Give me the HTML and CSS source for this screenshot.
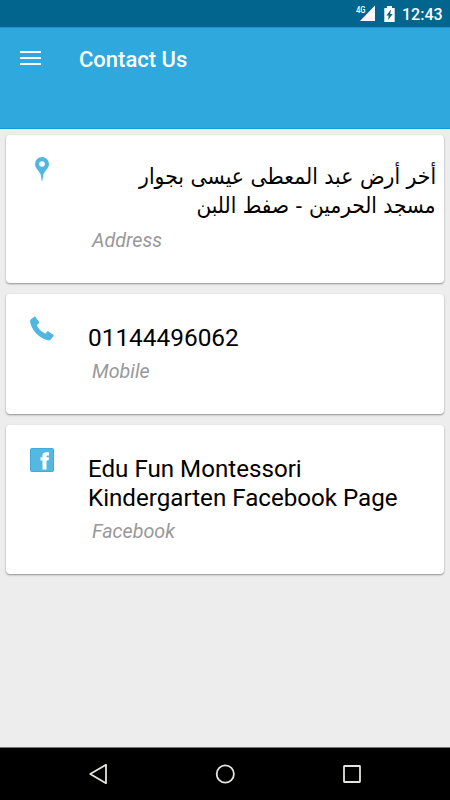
FILE: index.html
```
<!DOCTYPE html>
<html lang="en">
<head>
<meta charset="utf-8">
<title>Contact Us</title>
<link rel="stylesheet" href="styles.css">
</head>
<body>
<div class="screen">
  <div class="status">
    <svg class="signal" width="20" height="21" viewBox="0 0 20 21"><path d="M19 5.500v15.500H4z" fill="#fff"/></svg>
    <span class="net">4G</span>
    <svg class="battery" width="11" height="16" viewBox="0 0 11 16"><path d="M3 2V0h5v2h2.700v14H.3V2z" fill="#fff"/><path d="M7 3.500L2.300 9.500h2.500L4 14l4.700-6H6.200z" fill="#075f83"/></svg>
    <span class="clock">12:43</span>
  </div>
  <header class="toolbar">
    <svg class="menu" width="21" height="16" viewBox="0 0 21 16"><path d="M0 2h21M0 8h21M0 14h21" stroke="#fff" stroke-width="2"/></svg>
    <h1>Contact Us</h1>
  </header>
  <main>
    <section class="card address">
      <svg class="icon" width="26" height="26" viewBox="0 0 26 26"><path fill-rule="evenodd" d="M13 1a7 7 0 0 0-7 7c0 4 3.500 6 5.700 10.500L12.700 25h.6l1-6.500C16.500 14 20 12 20 8a7 7 0 0 0-7-7zm0 4.200a2.800 2.800 0 1 1 0 5.600 2.800 2.800 0 0 1 0-5.600z" fill="#50b7e1"/></svg>
      <div class="text">
        <p class="value arabic" dir="rtl" lang="ar"><span>أخر أرض عبد المعطى عيسى بجوار</span><br><span class="last">مسجد الحرمين - صفط اللبن</span></p>
        <p class="label">Address</p>
      </div>
    </section>
    <section class="card mobile">
      <svg class="icon" width="26" height="26" viewBox="0 0 26 26"><path d="M6.300.8L10.200 6c.3.500.2 1-.2 1.300L7.700 9c1.800 4 4.700 6.800 8.700 8.700l1.600-2c.4-.5.900-.6 1.400-.3l5 3.400c.4.300.5.700.2 1.100l-2.700 3.500c-.9.900-2 1.200-3.200.9C10 21.900 3.800 15.700 1.500 7.500 1.100 6 .7 4.500 1.700 3.500L5.200.7c.4-.3.800-.3 1.100.1z" fill="#50b7e1"/></svg>
      <div class="text">
        <p class="value number">01144496062</p>
        <p class="label">Mobile</p>
      </div>
    </section>
    <section class="card facebook">
      <svg class="icon" width="26" height="26" viewBox="0 0 26 26"><rect x="1.500" y=".5" width="23" height="23" rx="1" fill="#54b8e1" stroke="#3baedd"/><path d="M13.500 21.500v-9H11.500V9.200h2V7.500c0-2.600 1.500-3.300 4-3.300h2.500v3.200h-1.100c-1 0-1.400.2-1.400.9v.9h2.500l-.4 3.300h-2.100v9z" fill="#fff"/></svg>
      <div class="text">
        <p class="value">Edu Fun Montessori<br>Kindergarten Facebook Page</p>
        <p class="label">Facebook</p>
      </div>
    </section>
  </main>
  <nav>
    <svg width="20" height="22" viewBox="0 0 20 22"><path d="M18 1.800v18.400L2.200 11z"/></svg>
    <svg width="20" height="20" viewBox="0 0 20 20"><circle cx="10.300" cy="10" r="8.600"/></svg>
    <svg width="20" height="20" viewBox="0 0 20 20"><rect x="2" y="2" width="16" height="16" rx=".5"/></svg>
  </nav>
</div>
</body>
</html>
```
FILE: styles.css
```
* { box-sizing: border-box; }
body, h1, p { margin: 0; }
body { font-family: Roboto, "Liberation Sans", sans-serif; }
svg { display: block; flex: none; }

.screen {
  width: 450px;
  height: 800px;
  display: flex;
  flex-direction: column;
  background: #ededed;
  overflow: hidden;
}

.status {
  position: relative;
  height: 28px;
  flex: none;
  display: flex;
  align-items: flex-start;
  background: #02658d;
  border-bottom: 1px solid #1c93c6;
  color: #fff;
}
.signal { margin-left: 356px; }
.net {
  position: absolute;
  left: 356px;
  top: 5px;
  font-size: 9px;
  line-height: 10px;
  font-weight: 500;
  transform: scaleX(.85);
  transform-origin: left;
}
.battery { margin: 6px 0 0 8px; }
.clock {
  margin-left: 7px;
  font-size: 16px;
  line-height: 29px;
  font-weight: 500;
}

.toolbar {
  height: 101px;
  flex: none;
  display: flex;
  align-items: flex-start;
  background: #2ea8dd;
  border-bottom: 1px solid #119ad6;
  color: #fff;
}
.menu { margin: 22px 0 0 20px; }
h1 {
  margin: 17px 0 0 38px;
  font-size: 22px;
  line-height: 30px;
  font-weight: 500;
}

main {
  flex: 1;
  display: flex;
  flex-direction: column;
  gap: 11px;
  padding: 6px 6px 0;
}
.card {
  display: flex;
  padding: 21px 8px 0 23px;
  background: #fff;
  border-radius: 4px;
  box-shadow: 0 1px 2px rgba(0, 0, 0, .4);
}
.address { height: 148px; }
.mobile { height: 120px; }
.facebook { height: 149px; }
.mobile .icon { margin-top: 1px; }
.facebook .icon { margin-top: 2px; }
.text { flex: 1; padding: 9px 0 0 33px; }
.value {
  color: #000;
  font-size: 24.150px;
  line-height: 28.500px;
  white-space: nowrap;
}
.number { font-size: 24.400px; }
.label {
  margin: 8px 0 0 4px;
  color: #999;
  font-size: 19.700px;
  line-height: 24px;
  font-style: italic;
}
.address .label, .mobile .label { margin-top: 7px; }
.arabic {
  font-family: "DejaVu Sans", sans-serif;
  font-size: 22px;
}
.arabic span {
  display: inline-block;
  transform: translateY(-2px) scaleX(.928);
  transform-origin: right;
}
.arabic .last { transform: translateY(-2px) scaleX(.914); }

nav {
  height: 53px;
  flex: none;
  display: flex;
  align-items: center;
  justify-content: space-between;
  padding: 0 88px;
  background: #000;
  border-top: 1px solid #777;
}
nav svg { fill: none; stroke: #e4e4e0; stroke-width: 1.800; stroke-linejoin: round; }
```
